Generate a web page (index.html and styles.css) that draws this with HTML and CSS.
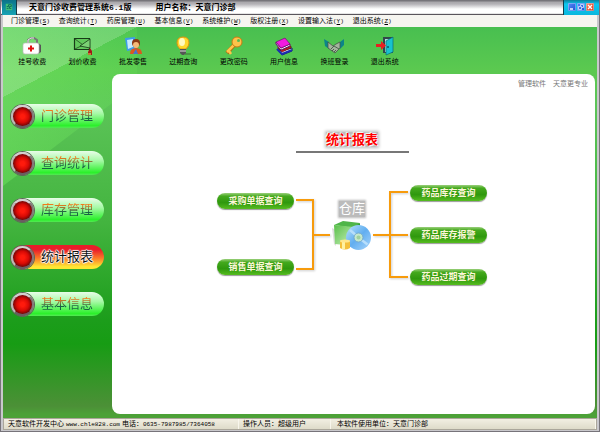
FILE: index.html
```html
<!DOCTYPE html>
<html lang="zh-CN">
<head>
<meta charset="utf-8">
<title>天意门诊收费管理系统6.1版</title>
<link rel="stylesheet" href="styles.css">
</head>
<body>
<div class="window">
  <header class="titlebar">
    <span class="app-icon"><svg viewBox="0 0 13 13"><rect x="3" y="3" width="7" height="7" fill="#3fbf7a"/><path d="M4 6h2V4h3v2H7v2h2M4 8h2" stroke="#0c6a5c" fill="none"/></svg></span>
    <h1 class="title">天意门诊收费管理系统6.1版</h1>
    <span class="title user">用户名称：天意门诊部</span>
    <div class="controls">
      <button class="ctl" aria-label="最小化"><svg viewBox="0 0 8 8"><path d="M2 6h3" stroke="#fff" stroke-width="1.4"/></svg></button>
      <button class="ctl" aria-label="还原"><svg viewBox="0 0 8 8"><path d="M3.5 3V1.5h3v3H5M1.5 3.5h3v3h-3z" stroke="#dbe8ff" stroke-width=".8" fill="none"/></svg></button>
      <button class="ctl close" aria-label="关闭"><svg viewBox="0 0 8 8"><path d="M2 2l4 4M6 2L2 6" stroke="#fff" stroke-width="1.3"/></svg></button>
    </div>
  </header>
  <nav class="menubar">
    <button>门诊管理<span class="key">(<u>S</u>)</span></button>
    <button>查询统计<span class="key">(<u>T</u>)</span></button>
    <button>药房管理<span class="key">(<u>U</u>)</span></button>
    <button>基本信息<span class="key">(<u>V</u>)</span></button>
    <button>系统维护<span class="key">(<u>W</u>)</span></button>
    <button>版权注册<span class="key">(<u>X</u>)</span></button>
    <button>设置输入法<span class="key">(<u>Y</u>)</span></button>
    <button>退出系统<span class="key">(<u>Z</u>)</span></button>
  </nav>
  <div class="workspace">
    <div class="toolbar">
      <button><svg viewBox="0 0 20 20"><path d="M6 7V4l3-2h3l3 2v3" fill="none" stroke="#777" stroke-width="2"/><path d="M6 7V4l3-2h3" fill="none" stroke="#eee"/><path d="M16 7l3 2v7l-3 2z" fill="#555"/><rect x="1" y="7" width="16" height="11" rx="2" fill="#fff" stroke="#bbb" stroke-width=".7"/><path d="M9 9.500v6M6 12.500h6" stroke="#e01010" stroke-width="2"/></svg>挂号收费</button>
      <button><svg viewBox="0 0 20 20"><path d="M1.500 2.500h15v11h-15z" fill="#62c95c" stroke="#173a17" stroke-width="1.200"/><path d="M2 3l8 6M2 13l8-4" fill="none" stroke="#173a17" stroke-width=".7"/><path d="M7 10l10-7v9z" fill="#7bd074" stroke="#173a17" stroke-width=".8"/><path d="M15 16l2-4 2 3v4h-4z" fill="#a01818"/><path d="M15 18h3" stroke="#f0d050"/></svg>划价收费</button>
      <button><svg viewBox="0 0 20 20"><path d="M2 2l10-1 1 12-9 2z" fill="#3c9cec"/><path d="M4 4l6-1v8l-5 2z" fill="#c6ecff"/><circle cx="13" cy="7" r="4" fill="#8c3914"/><circle cx="13" cy="9" r="3" fill="#f5ba79"/><path d="M7 18q0-6 6-6t6 6z" fill="#d95920"/><path d="M10 18l3-5 2 5z" fill="#4777c7"/></svg>批发零售</button>
      <button><svg viewBox="0 0 20 20"><path d="M12 18h6" stroke="#448c3c" stroke-width="1.500"/><path d="M7 13Q4 10 4 7q0-6 6-6t6 6q0 3-3 6z" fill="#ffd92b" stroke="#e09411"/><ellipse cx="9" cy="6" rx="3" ry="4" fill="#fffac0"/><path d="M7 13h6v4l-2 2H9l-2-2z" fill="#555"/><path d="M7 15h6" stroke="#ddd"/></svg>过期查询</button>
      <button><svg viewBox="0 0 20 20"><path d="M3 17l8-9" stroke="#b96a0c" stroke-width="4"/><path d="M3 16l9-9M5 15l2 3" stroke="#ffc64a" stroke-width="2.500"/><circle cx="13" cy="6" r="5" fill="#ffc34a" stroke="#c77b13"/><circle cx="14.500" cy="4.500" r="1.500" fill="#58bb50"/></svg>更改密码</button>
      <button><svg viewBox="0 0 20 20"><path d="M3 13l5 6 10-4v-3L7 15z" fill="#fff" stroke="#111a66"/><path d="M3 13l5 5 10-4" stroke="#1c2fb0" stroke-width="2" fill="none"/><path d="M4 10l4 4 9-4v2l-9 4-4-4z" fill="#d01920" stroke="#551018" stroke-width=".6"/><path d="M2 6l5 6 9-4v2l-9 4-5-6z" fill="#fff" stroke="#6d0d70"/><path d="M2 6l9-4 5 6-9 4z" fill="#f21be0" stroke="#73106f" stroke-width=".7"/></svg>用户信息</button>
      <button><svg viewBox="0 0 20 20"><path d="M0 3l5 3v7l-4-3zM20 3l-4 3v7l4-4z" fill="#0b8589"/><path d="M4 6l5 4 3-2 4-2v6l-5 5-7-5z" fill="#a4b49d" stroke="#455848" stroke-width=".8"/><path d="M7 13l3-3 5 3M8 15l2-2M10 16l2-2" stroke="#354f3b" stroke-width=".8" fill="none"/></svg>换班登录</button>
      <button><svg viewBox="0 0 20 20"><path d="M8 1h10v16H8z" fill="#33474a"/><path d="M10 3h7v13h-7z" fill="#a8ddd9"/><path d="M11 5l7-4v15l-7 3z" fill="#18c2ce" stroke="#086b75" stroke-width=".7"/><path d="M1 8h5V5l5 4.500L6 14v-3H1z" fill="#e62020"/><circle cx="13" cy="11" r="1" fill="#075b60"/></svg>退出系统</button>
    </div>
    <div class="main">
      <nav class="side">
        <button class="side-btn"><span>门诊管理</span></button>
        <button class="side-btn"><span>查询统计</span></button>
        <button class="side-btn"><span>库存管理</span></button>
        <button class="side-btn active"><span>统计报表</span></button>
        <button class="side-btn"><span>基本信息</span></button>
      </nav>
      <main class="panel">
        <p class="slogan">管理软件　天意更专业</p>
        <h2 class="heading"><span>统计报表</span></h2>
        <div class="diagram">
          <div class="col left">
            <button class="pill">采购单据查询</button>
            <button class="pill">销售单据查询</button>
          </div>
          <svg class="wire" viewBox="0 0 38 100"><path d="M2 15h17v69H2M19 50h17" /></svg>
          <div class="store">
            <span class="store-name">仓库</span>
            <svg viewBox="0 0 40 34"><defs><linearGradient id="box" x2="1" y2="1"><stop stop-color="#58bf49"/><stop offset="1" stop-color="#d0f3c1"/></linearGradient><linearGradient id="disc" x2="1" y2="1"><stop stop-color="#b9e3fc"/><stop offset=".5" stop-color="#62aef0"/><stop offset="1" stop-color="#a8d5fb"/></linearGradient></defs><path d="M0 9l4 2v16l-2-2z" fill="#ddd"/><path d="M2 6l9-4 17 2-6 5z" fill="#4fb549"/><path d="M2 6l20 2v19L3 25z" fill="url(#box)"/><path d="M22 8l6-4v16l-6 6z" fill="#2d9b32"/><circle cx="26.500" cy="18.500" r="12.500" fill="url(#disc)"/><path d="M26.500 18.500L18 11M26.500 18.500l9 7" stroke="#b7defb" stroke-width="2.500"/><circle cx="26.500" cy="18.500" r="4.500" fill="#c5e9ce" stroke="#76aacc"/><circle cx="26.500" cy="18.500" r="2" fill="#9fd1a0"/><path d="M8 22h10v7q-5 3-10 0z" fill="#f4bf3b"/><path d="M10 22h3v8h-3z" fill="#fff1a1"/><ellipse cx="13" cy="22" rx="5" ry="1.500" fill="#ffe68c"/></svg>
          </div>
          <svg class="wire" viewBox="0 0 38 100"><path d="M1 50h35M36 7H18v85h18" /></svg>
          <div class="col">
            <button class="pill">药品库存查询</button>
            <button class="pill">药品库存报警</button>
            <button class="pill">药品过期查询</button>
          </div>
        </div>
      </main>
    </div>
  </div>
  <footer class="status">
    <span class="cell company">天意软件开发中心 <span class="mono">www.chle828.com</span> 电话：<span class="mono">0635-7987985/7364058</span></span>
    <span class="cell operator">操作人员：超级用户</span>
    <span class="cell unit">本软件使用单位：天意门诊部</span>
  </footer>
</div>
</body>
</html>
```
FILE: styles.css
```css
*, *::before { box-sizing: border-box; }

body {
  margin: 0;
  font: 7px/10px "Liberation Sans", "Noto Sans CJK SC", sans-serif;
  color: #000;
}

button {
  margin: 0;
  padding: 0;
  border: 0;
  background: none;
  font: inherit;
  color: inherit;
  white-space: nowrap;
}

svg { display: block; }

.window {
  display: flex;
  flex-direction: column;
  min-height: 100vh;
  border: 1px solid #77747a;
  border-top: 0;
  background: #c9c8cc;
  padding: 0 2px 1px;
}

.titlebar {
  display: flex;
  align-items: center;
  height: 15px;
  margin: 0 -2px;
  border-bottom: 1px solid #5a555c;
  background: linear-gradient(#77757a 0, #77757a 1px, #a9a7ab 2px, #b4b2b6 4px, #fff 9px, #fff 13px, #ccc 14px);
}

.app-icon {
  width: 15px;
  height: 15px;
  padding: 1px;
  margin: 0 12px 0 1px;
  background: linear-gradient(#0b7389, #18a3b4);
  border-right: 1px solid #173a44;
}

.title {
  margin: 0;
  padding-top: 2px;
  font: bold 8px/12px "Liberation Mono", "Noto Sans CJK SC", monospace;
}

.user { margin-left: 24px; }

.controls {
  display: flex;
  align-items: center;
  gap: 1px;
  height: 15px;
  margin-left: auto;
  padding: 0 5px 0 4px;
  background: linear-gradient(#0c7e9c, #0cc6ef 4px, #0ab7de);
  border-left: 1px solid #123f4d;
}

.ctl {
  width: 8px;
  height: 8px;
  border-radius: 1px;
  background: linear-gradient(135deg, #5c8cf5, #174fd6);
  box-shadow: 0 0 0 1px rgb(190 220 255 / 45%) inset;
}

.ctl.close { background: linear-gradient(135deg, #ff8060, #dd3512); }

.menubar {
  display: flex;
  gap: 9px;
  height: 12px;
  padding-left: 8px;
  background: #f6f5f0;
}

.key, .mono { font: 6px/10px "Liberation Mono", monospace; }

.workspace {
  position: relative;
  z-index: 0;
  display: flex;
  flex: 1;
  flex-direction: column;
  padding: 0 2px 4px 0;
  background: linear-gradient(#48bf50, #5bc950 11%, #5cc458 20%, #43b43f 50%, #1c9d1b 75%, #179c14 81%, #4c9037 97%, #4ca137 99%);
}

.workspace::before {
  content: "";
  position: absolute;
  z-index: -1;
  left: 0;
  top: 0;
  width: 134px;
  height: 159px;
  background:
    linear-gradient(to bottom right, rgb(255 255 255 / 18%) 50%, transparent 50%) 0 0 / 134px 70px no-repeat,
    linear-gradient(to right, rgb(120 240 100 / 40%), rgb(110 240 90 / 15%));
  clip-path: polygon(0 0, 100% 0, 100% 36%, 0 100%);
}

.toolbar {
  display: grid;
  grid-template-columns: repeat(8, 1fr);
  width: 403px;
  height: 47px;
  padding-top: 9px;
  margin-left: 4px;
}

.toolbar button {
  display: flex;
  flex-direction: column;
  align-items: center;
  gap: 1px;
}

.toolbar svg {
  width: 20px;
  height: 20px;
}

.main {
  display: flex;
  flex: 1;
}

.side {
  display: flex;
  flex-direction: column;
  gap: 23px;
  width: 109px;
  padding: 30px 8px 0;
}

.side-btn {
  display: flex;
  align-items: center;
  height: 24px;
  border-radius: 12px;
  background: linear-gradient(#e8fde8, #a6f9a6 40%, #2bf02b 90%, #55e855);
  font-size: 13px;
  line-height: 20px;
}

.side-btn::before {
  content: "";
  width: 23px;
  height: 23px;
  margin-right: 7px;
  border: 2px solid #8b777b;
  border-color: #d5ced0 #857579 #6c5c60 #c0b4b7;
  border-radius: 50%;
  background: radial-gradient(circle, #ff1a0c 15%, #d80a05 45%, #6d0505 72%);
  box-shadow: 0 0 0 1px #5d6758;
}

.side-btn span {
  background: linear-gradient(#ff7a16 20%, #7f7340 45%, #176545 60%, #235b40);
  background-clip: text;
  color: transparent;
}

.side-btn.active { background: linear-gradient(#e91d2a 20%, #fb7a27 55%, #ffe633 90%); }

.side-btn.active span {
  background: none;
  color: #101010;
  text-shadow: 0 0 1px #fff, 1px 0 1px #fff, -1px 0 1px #fff, 0 1px 1px #fff, 0 -1px 1px #fff;
}

.panel {
  display: flex;
  flex: 1;
  flex-direction: column;
  align-items: center;
  padding: 5px 3px 0 0;
  border-radius: 8px;
  background: #fff;
}

.slogan {
  align-self: flex-end;
  margin: 0 4px 0 0;
  color: #777;
}

.heading {
  width: 113px;
  margin: 41px 0 32px;
  padding-bottom: 1px;
  border-bottom: 2px solid #777;
  font-size: 13px;
  line-height: 20px;
  text-align: center;
}

.heading span {
  background: #bcbcbc;
  box-shadow: 0 0 3px 1px #bcbcbc;
  color: #f00;
  text-shadow: 0 0 1px #fff, 1px 1px 1px #fff, -1px -1px 1px #fff;
}

.diagram {
  display: flex;
  height: 100px;
}

.col {
  display: flex;
  flex-direction: column;
  justify-content: space-between;
}

.left { padding: 8px 0 10px; }

.pill {
  width: 77px;
  height: 16px;
  border-radius: 8px;
  background: linear-gradient(#9bd07c, #44a91d 20%, #2f980d 60%, #56bc20);
  box-shadow: 0 1px 1px #999;
  color: #fdf6d8;
  font-size: 9px;
  font-weight: bold;
  line-height: 14px;
}

.wire {
  width: 38px;
  height: 100px;
  fill: none;
  stroke: #f79b0c;
  stroke-width: 2;
  filter: drop-shadow(1px 1px 1px #ccc);
}

.store {
  display: flex;
  flex-direction: column;
  align-items: center;
  width: 40px;
  padding-top: 16px;
}

.store-name {
  width: 26px;
  margin-bottom: 2px;
  background: #bbb;
  box-shadow: 0 0 2px 1px #bbb;
  color: #fff;
  font-size: 13px;
  line-height: 16px;
}

.store svg {
  width: 40px;
  height: 34px;
}

.status {
  display: flex;
  height: 12px;
  border: 1px solid #aaa69a;
  background: linear-gradient(#f2efe2, #dedbc9);
}

.cell {
  padding-left: 4px;
  border-right: 1px solid #f8f6ec;
  white-space: nowrap;
}

.company { width: 235px; }

.operator { width: 92px; }

.unit {
  flex: 1;
  padding-left: 6px;
}
```
